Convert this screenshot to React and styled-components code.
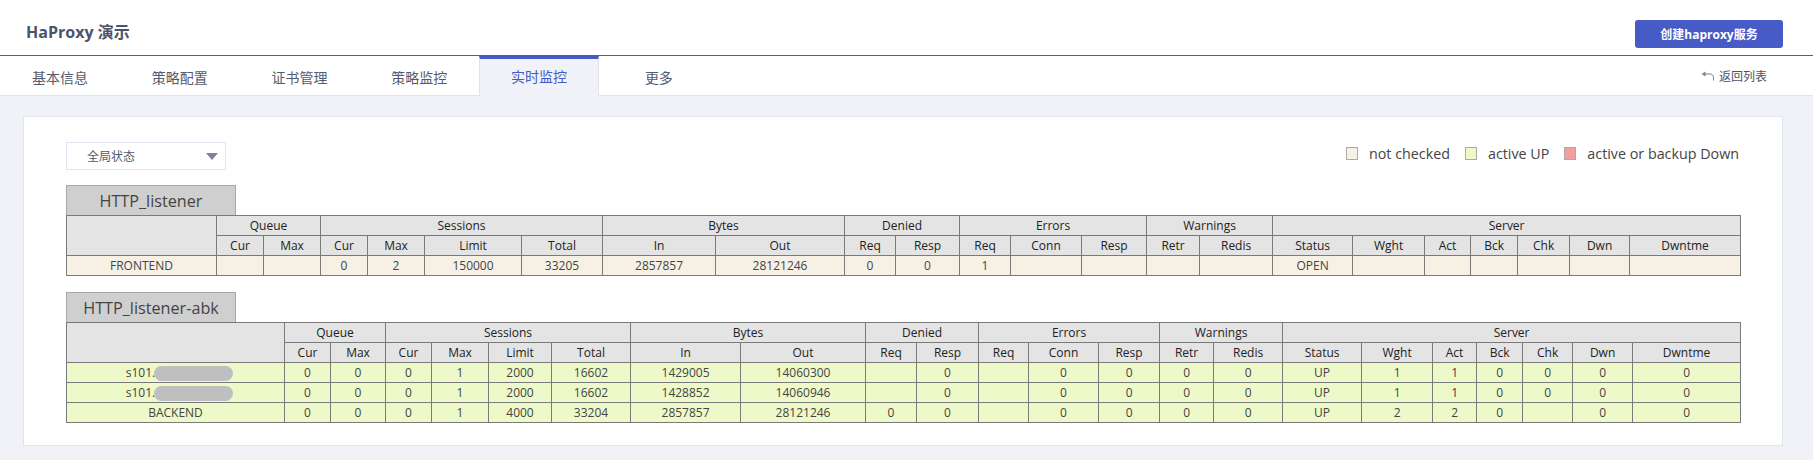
import React from 'react';
import styled, { createGlobalStyle } from 'styled-components';

const BLUE = '#475bc6';
const FONT = '"Open Sans", "Noto Sans CJK SC", sans-serif';

const GlobalStyle = createGlobalStyle`
  html, body { margin: 0; padding: 0; background: #f0f2f7; }
  body { font-family: ${FONT}; min-height: 460px; }
  * { box-sizing: border-box; }
`;

const Header = styled.header`
  height: 56px;
  display: flex;
  align-items: flex-start;
  justify-content: space-between;
  padding: 20px 30px 0 26px;
  background: #fff;
  border-bottom: 1px solid ${BLUE};
`;

const Title = styled.h1`
  margin: 0;
  font-size: 16px;
  line-height: 24px;
  font-weight: 700;
  color: #4d5369;
`;

const CreateButton = styled.button`
  width: 148px;
  height: 28px;
  border: 0;
  border-radius: 3px;
  background: ${BLUE};
  color: #fff;
  font-family: inherit;
  font-size: 12px;
  font-weight: 700;
  padding: 0;
`;

const TabBar = styled.nav`
  height: 40px;
  display: flex;
  align-items: stretch;
  background: #fff;
  border-bottom: 1px solid #dfe3ee;
`;

const Tab = styled.div`
  width: 119.8px;
  margin-bottom: ${p => (p.$active ? '-1px' : '0')};
  display: flex;
  align-items: center;
  justify-content: center;
  font-size: 14px;
  color: ${p => (p.$active ? BLUE : '#555a6e')};
  background: ${p => (p.$active ? '#f0f2f7' : 'transparent')};
  border-top: 3px solid ${p => (p.$active ? BLUE : 'transparent')};
  border-left: 1px solid ${p => (p.$active ? '#dfe3ee' : 'transparent')};
  border-right: 1px solid ${p => (p.$active ? '#dfe3ee' : 'transparent')};
  padding-bottom: ${p => (p.$active ? '3px' : '0')};
`;

const BackLink = styled.a`
  margin-left: auto;
  padding-right: 46px;
  display: flex;
  align-items: center;
  gap: 5px;
  font-size: 12px;
  color: #4d5369;
  svg { display: block; }
`;

const Content = styled.main`
  padding: 20px 30px 15px 23px;
`;

const Panel = styled.section`
  height: 330px;
  padding: 25px 42px 0;
  background: #fff;
  border: 1px solid #dfe5f1;
`;

const Toolbar = styled.div`
  height: 28px;
  margin-bottom: 15px;
  padding-right: 1px;
  display: flex;
  align-items: center;
  justify-content: space-between;
`;

const Select = styled.div`
  width: 160px;
  height: 28px;
  padding: 0 7px 0 20px;
  display: flex;
  align-items: center;
  justify-content: space-between;
  border: 1px solid #dfe5f1;
  font-size: 12px;
  color: #555a6e;
`;

const Caret = styled.span`
  width: 0;
  height: 0;
  border-left: 6px solid transparent;
  border-right: 6px solid transparent;
  border-top: 7px solid #7d8299;
`;

const Legend = styled.div`
  display: flex;
  align-items: center;
  font-size: 14.3px;
  color: #444;
  margin-top: -6px;
`;

const LegendItem = styled.span`
  display: flex;
  align-items: center;
  gap: 11px;
  margin-left: 15px;
`;

const Swatch = styled.i`
  width: 12px;
  height: 13px;
  border: 1px solid #aaa;
  background: ${p => p.$color};
`;

const Proxy = styled.div`
  margin-bottom: ${p => (p.$last ? '0' : '16px')};
`;

const ProxyName = styled.div`
  width: 170px;
  height: 31px;
  margin-bottom: -1px;
  display: flex;
  align-items: center;
  justify-content: center;
  background: #cfcfcf;
  border: 1px solid #a8a8a8;
  font-size: 16.2px;
  color: #444;
`;

const StatsTable = styled.table`
  width: 1674px;
  table-layout: fixed;
  border-collapse: collapse;
  font-size: 12px;
  line-height: 19px;
  text-align: center;
`;

const HeadCell = styled.th`
  height: 20px;
  padding: 0;
  font-weight: 400;
  color: #222;
  background: #e4e4e4;
  border: 1px solid #7a7a7a;
`;

const Cell = styled.td`
  height: 20px;
  padding: 0;
  color: #444;
  background: ${p => p.$bg};
  border: 1px solid #7a7a7a;
  white-space: nowrap;
`;

const Masked = styled.span`
  display: inline-block;
  width: 79px;
  height: 15px;
  margin: 0 -8px 0 -1px;
  border-radius: 8px;
  background: #bfbfbf;
  vertical-align: middle;
`;

const GROUPS = [
  ['Queue', ['Cur', 'Max']],
  ['Sessions', ['Cur', 'Max', 'Limit', 'Total']],
  ['Bytes', ['In', 'Out']],
  ['Denied', ['Req', 'Resp']],
  ['Errors', ['Req', 'Conn', 'Resp']],
  ['Warnings', ['Retr', 'Redis']],
  ['Server', ['Status', 'Wght', 'Act', 'Bck', 'Chk', 'Dwn', 'Dwntme']],
];

const OPEN_BG = '#f7f1e5';
const UP_BG = '#edf9c9';

const listeners = [
  {
    name: 'HTTP_listener',
    widths: [150, 47, 57, 47, 57, 97, 81, 113, 129, 51, 64, 51, 71, 65, 53, 73, 80, 72, 46, 47, 52, 60, 111],
    rows: [
      { bg: OPEN_BG, label: 'FRONTEND', cells: ['', '', '0', '2', '150000', '33205', '2857857', '28121246', '0', '0', '1', '', '', '', '', 'OPEN', '', '', '', '', '', ''] },
    ],
  },
  {
    name: 'HTTP_listener-abk',
    widths: [218, 46, 55, 46, 57, 63, 79, 110, 125, 51, 62, 50, 70, 61, 54, 69, 79, 71, 44, 46, 50, 60, 108],
    rows: [
      { bg: UP_BG, label: 's101.', masked: true, cells: ['0', '0', '0', '1', '2000', '16602', '1429005', '14060300', '', '0', '', '0', '0', '0', '0', 'UP', '1', '1', '0', '0', '0', '0'] },
      { bg: UP_BG, label: 's101.', masked: true, cells: ['0', '0', '0', '1', '2000', '16602', '1428852', '14060946', '', '0', '', '0', '0', '0', '0', 'UP', '1', '1', '0', '0', '0', '0'] },
      { bg: UP_BG, label: 'BACKEND', cells: ['0', '0', '0', '1', '4000', '33204', '2857857', '28121246', '0', '0', '', '0', '0', '0', '0', 'UP', '2', '2', '0', '', '0', '0'] },
    ],
  },
];

const TABS = ['基本信息', '策略配置', '证书管理', '策略监控', '实时监控', '更多'];

const BackIcon = () => (
  <svg width="13" height="10" viewBox="0 0 13 10" fill="none">
    <path d="M0.5 3 L4.5 0.5 V5.5 Z" fill="#7d8299" />
    <path d="M4 3 H9 C11 3 12.5 4.5 12.5 7 V9.5" stroke="#7d8299" strokeWidth="1" />
  </svg>
);

const ListenerTable = ({ listener }) => (
  <StatsTable>
    <colgroup>
      {listener.widths.map((w, i) => <col key={i} width={w} />)}
    </colgroup>
    <thead>
      <tr>
        <HeadCell rowSpan={2} />
        {GROUPS.map(([title, cols]) => (
          <HeadCell key={title} colSpan={cols.length}>{title}</HeadCell>
        ))}
      </tr>
      <tr>
        {GROUPS.flatMap(([title, cols]) => cols.map(c => (
          <HeadCell key={title + c}>{c}</HeadCell>
        )))}
      </tr>
    </thead>
    <tbody>
      {listener.rows.map((row, r) => (
        <tr key={r}>
          <Cell $bg={row.bg}>
            {row.label}
            {row.masked && <Masked />}
          </Cell>
          {row.cells.map((c, i) => <Cell key={i} $bg={row.bg}>{c}</Cell>)}
        </tr>
      ))}
    </tbody>
  </StatsTable>
);

export default function App() {
  return (
    <>
      <GlobalStyle />
      <Header>
        <Title>HaProxy 演示</Title>
        <CreateButton type="button">创建haproxy服务</CreateButton>
      </Header>
      <TabBar>
        {TABS.map(t => <Tab key={t} $active={t === '实时监控'}>{t}</Tab>)}
        <BackLink><BackIcon />返回列表</BackLink>
      </TabBar>
      <Content>
        <Panel>
          <Toolbar>
            <Select>全局状态<Caret /></Select>
            <Legend>
              <LegendItem><Swatch $color={OPEN_BG} />not checked</LegendItem>
              <LegendItem><Swatch $color={UP_BG} />active UP</LegendItem>
              <LegendItem><Swatch $color="#f49ea0" />active or backup Down</LegendItem>
            </Legend>
          </Toolbar>
          {listeners.map((l, i) => (
            <Proxy key={l.name} $last={i === listeners.length - 1}>
              <ProxyName>{l.name}</ProxyName>
              <ListenerTable listener={l} />
            </Proxy>
          ))}
        </Panel>
      </Content>
    </>
  );
}
